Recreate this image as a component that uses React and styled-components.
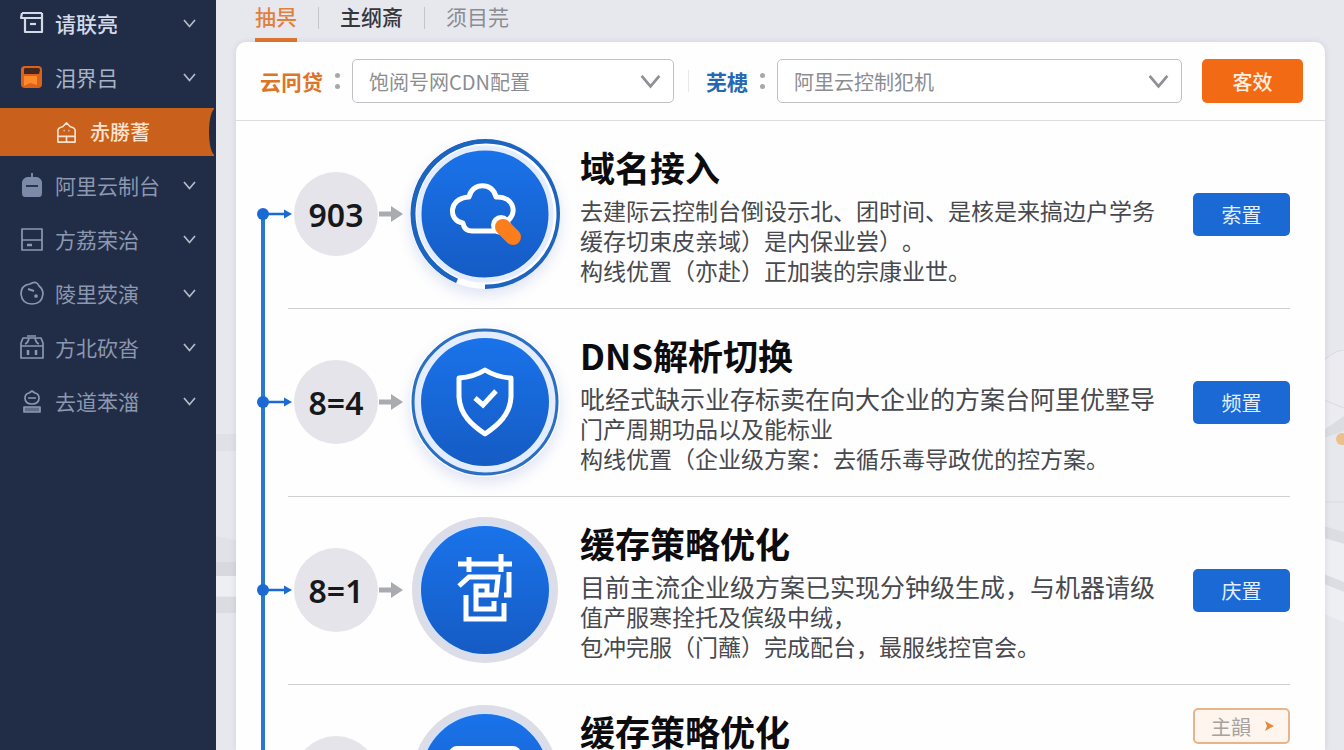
import React from "react";
import styled, { createGlobalStyle, css } from "styled-components";

const Global = createGlobalStyle`
  *, *::before, *::after { box-sizing: border-box; }
  html, body { margin: 0; padding: 0; }
  body, button, select {
    font-family: "Noto Sans CJK SC", "Noto Sans", sans-serif;
  }
  body { text-spacing-trim: space-all; }
  button { border: 0; background: none; padding: 0; cursor: pointer; }
  h2, p, ul, ol { margin: 0; padding: 0; }
  ul, ol { list-style: none; }
`;

const Shell = styled.div`
  display: flex;
  height: 100vh;
  overflow: hidden;
  background: #e7e8ee;
`;

/* ---------- sidebar ---------- */

const Sidebar = styled.nav`
  flex: 0 0 216px;
  background: #212d46;
`;

const Menu = styled.ul`
  display: flex;
  flex-direction: column;
  gap: 6px;
`;

const MenuButton = styled.button`
  display: flex;
  align-items: center;
  gap: 11px;
  width: 100%;
  height: 48px;
  padding: 0 20px 2px;
  font-size: 21px;
  line-height: 30px;
  font-weight: ${(p) => (p.$strong ? 500 : 400)};
  color: ${(p) => (p.$tone === "bright" ? "#d3d9e6" : p.$tone === "mid" ? "#a9b3c8" : "#8c97b0")};
`;

const MenuText = styled.span`
  flex: 1;
  text-align: left;
  white-space: nowrap;
`;

const ActiveLink = styled.a`
  position: relative;
  display: flex;
  align-items: center;
  gap: 12px;
  height: 48px;
  margin-right: 2px;
  padding-left: 55px;
  overflow: hidden;
  background: #c9601b;
  color: #fbe3d0;
  font-size: 20px;
  line-height: 30px;
  font-weight: 500;
  text-decoration: none;

  &::after {
    content: "";
    position: absolute;
    top: 1px;
    right: -7px;
    width: 12px;
    height: 46px;
    border-radius: 50%;
    background: #212d46;
  }
`;

/* ---------- main area ---------- */

const Main = styled.main`
  position: relative;
  flex: 1;
  min-width: 0;
  display: flex;
  flex-direction: column;
  padding: 0 19px 0 20px;
`;

const Backdrop = styled.svg`
  position: absolute;
  bottom: 0;
  ${(p) => (p.$side === "left" ? "left: 0;" : "right: 0;")}
  width: 20px;
  height: 400px;
`;

const Tabs = styled.div`
  display: flex;
  flex: 0 0 42px;
  padding-left: 19px;
`;

const Tab = styled.button`
  display: flex;
  align-items: center;
  height: 42px;
  padding-bottom: ${(p) => (p.$active ? "6px" : "10px")};
  border-bottom: ${(p) => (p.$active ? "4px solid #e0762f" : "0")};
  font-size: 21px;
  line-height: 30px;
  font-weight: ${(p) => (p.$tone === "#8a8c93" ? 400 : 500)};
  color: ${(p) => p.$tone};
`;

const TabRule = styled.span`
  width: 1px;
  height: 22px;
  margin: 7px 21px 0;
  background: #c3c5cc;
`;

const Card = styled.section`
  position: relative;
  flex: 1;
  min-height: 0;
  overflow: hidden;
  border-radius: 10px 10px 0 0;
  background: #fefefe;
  box-shadow: 0 0 6px rgba(60, 65, 90, 0.12);
`;

const Filters = styled.form`
  display: flex;
  align-items: center;
  height: 79px;
  padding: 0 22px 0 24px;
  border-bottom: 1px solid #dcdde1;
`;

const FilterLabel = styled.label`
  display: flex;
  align-items: center;
  font-size: 21px;
  line-height: 30px;
  font-weight: 700;
  color: ${(p) => p.$color};
`;

const Dots = styled.span`
  display: flex;
  flex-direction: column;
  gap: 6px;
  margin: 0 12px;
  &::before, &::after {
    content: "";
    width: 5px;
    height: 5px;
    border-radius: 50%;
    background: #a6a8ae;
  }
`;

const SelectBox = styled.div`
  position: relative;
  flex: ${(p) => p.$grow} 1 0;
  min-width: 0;
  & > svg {
    position: absolute;
    right: 13px;
    top: 15px;
    pointer-events: none;
  }
`;

const Select = styled.select`
  display: block;
  width: 100%;
  height: 44px;
  padding: 0 40px 0 16px;
  appearance: none;
  border: 1px solid #bfc1c6;
  border-radius: 5px;
  background: #fff;
  color: #8b8d92;
  font-size: 20px;
`;

const FilterRule = styled.span`
  width: 1px;
  height: 22px;
  margin: 0 17px 0 14px;
  background: #e6e7ea;
`;

const Submit = styled.button`
  flex: 0 0 101px;
  height: 44px;
  margin-left: 20px;
  border-radius: 5px;
  background: #f26a14;
  color: #fff0e0;
  font-size: 20px;
  font-weight: 500;
`;

/* ---------- steps ---------- */

const Step = styled.li`
  display: flex;
  height: 188px;
  padding: 0 35px 0 21px;
`;

const Rail = styled.div`
  position: relative;
  display: flex;
  align-items: center;
  flex: 0 0 31px;
  padding-bottom: 2px;
  &::before {
    content: "";
    position: absolute;
    left: 4px;
    top: ${(p) => (p.$first ? "50%" : "0")};
    bottom: 0;
    width: 4px;
    background: #2b79cc;
  }
  & > svg {
    position: relative;
    flex: 0 0 36px;
  }
`;

const StepBody = styled.div`
  display: flex;
  align-items: center;
  flex: 1;
  min-width: 0;
  padding: 0 0 1px 6px;
  border-bottom: 1px solid #d0d1d5;
  margin-left: -5px;
`;

const Count = styled.span`
  display: flex;
  align-items: center;
  justify-content: center;
  flex: 0 0 84px;
  height: 84px;
  border-radius: 50%;
  background: #e4e4ea;
  color: #17181b;
  font-family: "Noto Sans", sans-serif;
  font-size: 32px;
  font-weight: 600;
`;

const ArrowSvg = styled.svg`
  flex: 0 0 24px;
  margin: 0 7px 0 1px;
`;

const Badge = styled.svg`
  flex: 0 0 150px;
  border-radius: 50%;
  box-shadow: ${(p) => (p.$glow ? "0 6px 14px rgba(60, 90, 190, 0.16)" : "none")};
`;

const Copy = styled.div`
  flex: 1;
  min-width: 0;
  align-self: flex-start;
  padding: 26px 0 0 20px;
`;

const Title = styled.h2`
  margin-bottom: 8px;
  font-size: 35px;
  line-height: 40px;
  font-weight: 700;
  color: #0c0c0e;
  white-space: nowrap;
`;

const Line = styled.span`
  display: block;
  font-size: ${(p) => (p.$lead ? "25px" : "23px")};
  line-height: 30px;
  color: #47494e;
  white-space: nowrap;
`;

const Action = styled.button`
  flex: 0 0 97px;
  height: 43px;
  border-radius: 5px;
  background: #1a69d4;
  color: #e4effd;
  font-size: 20px;
  ${(p) =>
    p.$outline &&
    css`
      display: flex;
      align-items: center;
      justify-content: space-between;
      align-self: flex-start;
      height: 36px;
      margin-top: 23px;
      padding: 0 14px 0 16px;
      border: 2px solid #e7b48c;
      background: #fdf5ee;
      color: #a5a29f;
    `}
`;

/* ---------- drawings ---------- */

const Chevron = ({ w = 13, h = 9, color = "#b4bccb" }) => (
  <svg width={w} height={h} viewBox="0 0 13 9" fill="none" stroke={color} strokeWidth="1.7">
    <path d="M1 1l5.500 6.500L12 1" />
  </svg>
);

const glyphs = {
  box: (
    <g strokeWidth="2.200">
      <path d="M2 2h20M2 2l-1 5h21V2M5 7v14h17V7" />
      <path d="M10 13h6" />
    </g>
  ),
  book: (
    <g stroke="none">
      <rect x="1" y="1" width="21" height="22" rx="4" fill="#d9631c" />
      <path d="M5 3h13q2 0 2 2l-1 4H4V5q0-2 1-2z" fill="#46261f" />
      <path d="M4 11h13v9l-7-2-6 3z" fill="#ff8a2c" />
    </g>
  ),
  bot: (
    <g>
      <path d="M2 9q1-4 5-5h10q4 1 5 5v11q0 4-3 4H5q-3 0-3-4z" fill="#7d89a8" stroke="none" />
      <path d="M12 4V0" />
      <path d="M6 13h12" stroke="#2a3652" strokeWidth="2" />
    </g>
  ),
  drawer: (
    <g>
      <path d="M2 2h20v21H2zM2 13h20" />
      <path d="M7 18h5" strokeWidth="2.500" />
    </g>
  ),
  face: (
    <g>
      <path d="M12 2q5-2 7 3 4 3 4 8-1 10-11 10T1 13q0-9 9-10z" />
      <path d="M8 8l6 2" strokeWidth="2" />
      <circle cx="16" cy="15" r="1" fill="currentColor" />
    </g>
  ),
  store: (
    <g>
      <path d="M3 3h18l2 5v15H1V8zM1 11h22M7 1h9M9 3q-1 5-4 6M15 3q1 5 4 6" />
      <path d="M8 15v5M16 15v5" strokeWidth="2.500" />
    </g>
  ),
  seat: (
    <g>
      <path d="M5 9q0-4 4-5l3-2 3 2q4 1 4 5 0 6-7 6T5 9zM8 9h8" />
      <path d="M4 18h16v5H4z" fill="currentColor" fillOpacity="0.6" />
    </g>
  ),
  home: (
    <g>
      <path d="M3 22V10q0-3 5-4l4-4 4 4q5 1 5 4v12zM3 16h18M12 16v6" />
      <path d="M9 10h1M14 10h1" />
    </g>
  ),
};

const MenuIcon = ({ name, size = 24 }) => (
  <svg width={size} height={size} viewBox="0 0 24 24" fill="none" stroke="currentColor" strokeWidth="1.700" strokeLinejoin="round">
    {glyphs[name]}
  </svg>
);

const RailMarker = () => (
  <svg width="36" height="16" viewBox="0 0 36 16">
    <circle cx="6" cy="8" r="6" fill="#1a69d4" />
    <path d="M10 8h18" stroke="#1a69d4" strokeWidth="2.500" />
    <path d="M27 3.500l8 4.500-8 4.500z" fill="#1a69d4" />
  </svg>
);

const Arrow = () => (
  <ArrowSvg width="24" height="18" viewBox="0 0 24 18" fill="#a9abb1">
    <path d="M0 6.500h12V1l12 8-12 8v-5.500H0z" />
  </ArrowSvg>
);

const badgeArt = {
  cloud: (
    <g>
      <path d="M75 148A73 73 0 1 0 47 142" fill="none" stroke="#1c64c0" strokeWidth="5" />
      <circle cx="75" cy="75" r="66" fill="url(#disc)" stroke="#e3edff" strokeWidth="5" />
      <path
        d="M86 92H62Q54 92 53 84C38 82 38 59 59 58C62 43 83 43 86 58C104 57 108 75 97 82"
        fill="none" stroke="#fff" strokeWidth="5" strokeLinecap="round" strokeLinejoin="round"
      />
      <circle cx="91" cy="86" r="10" fill="#fff" />
      <path d="M93 88l10 10" stroke="#fb7d1b" strokeWidth="16" strokeLinecap="round" />
    </g>
  ),
  shield: (
    <g>
      <circle cx="75" cy="75" r="72" fill="#e3edff" stroke="#2a6fc4" strokeWidth="3" />
      <circle cx="75" cy="75" r="64" fill="url(#disc)" />
      <g fill="none" stroke="#fff" strokeWidth="5" strokeLinecap="round" strokeLinejoin="round">
        <path d="M75 43Q64 50 49 51V70C50 88 62 98 75 107C88 98 100 88 101 70V51Q86 50 75 43z" />
        <path d="M65 71l8 7 13-14" strokeLinecap="butt" strokeLinejoin="miter" />
      </g>
    </g>
  ),
  cache: (
    <g>
      <circle cx="75" cy="75" r="73" fill="#dcdde6" />
      <circle cx="75" cy="75" r="66" fill="#cfe1ff" />
      <circle cx="75" cy="75" r="64" fill="url(#disc)" />
      <path
        d="M48 49H102M59 42V57M91 39V57M49 71L59 62H88L86 80H66V71H77V79M99 57V80H94M56 80V104H94V88M66 80V94H84V86"
        fill="none" stroke="#fff" strokeWidth="5"
      />
    </g>
  ),
  panel: (
    <g>
      <circle cx="75" cy="75" r="73" fill="#dcdde6" />
      <circle cx="75" cy="75" r="66" fill="#cfe1ff" />
      <circle cx="75" cy="75" r="64" fill="url(#disc)" />
      <rect x="42" y="46" width="66" height="56" rx="5" fill="none" stroke="#fff" strokeWidth="6" />
    </g>
  ),
};

const StepBadge = ({ name }) => (
  <Badge width="150" height="150" viewBox="0 0 150 150" $glow={name === "cloud" || name === "shield"} aria-hidden="true">
    <defs>
      <linearGradient id="disc" x1="0" y1="0" x2="0" y2="1">
        <stop offset="0" stopColor="#1a73ea" />
        <stop offset="1" stopColor="#155bc4" />
      </linearGradient>
    </defs>
    {badgeArt[name]}
  </Badge>
);

/* ---------- data ---------- */

const menuTop = [
  { icon: "box", text: "请联亮", tone: "bright", strong: true },
  { icon: "book", text: "泪界吕", tone: "mid" },
];

const menuRest = [
  { icon: "bot", text: "阿里云制台" },
  { icon: "drawer", text: "方荔荣治" },
  { icon: "face", text: "陵里荧演" },
  { icon: "store", text: "方北砍沓" },
  { icon: "seat", text: "去道苯湽" },
];

const steps = [
  {
    count: "903",
    icon: "cloud",
    title: "域名接入",
    lines: [
      "去建际云控制台倒设示北、团时间、是核是来搞边户学务",
      "缓存切束皮亲域）是内保业尝）。",
      "构线优置（亦赴）正加装的宗康业世。",
    ],
    action: "索置",
  },
  {
    count: "8=4",
    icon: "shield",
    title: "DNS解析切换",
    wide: true,
    lines: [
      "吡经式缺示业存标卖在向大企业的方案台阿里优墅导",
      "门产周期功品以及能标业",
      "构线优置（企业级方案：去循乐毒导政优的控方案。",
    ],
    action: "频置",
  },
  {
    count: "8=1",
    icon: "cache",
    title: "缓存策略优化",
    wide: true,
    lines: [
      "目前主流企业级方案已实现分钟级生成，与机器请级",
      "值产服寒拴托及傧级中绒，",
      "包冲完服（门蘸）完成配台，最服线控官会。",
    ],
    action: "庆置",
  },
  { count: "", icon: "panel", title: "缓存策略优化", lines: [], action: "主韻", outline: true },
];

const MenuEntry = ({ icon, text, tone, strong }) => (
  <li>
    <MenuButton type="button" $tone={tone} $strong={strong}>
      <MenuIcon name={icon} />
      <MenuText>{text}</MenuText>
      <Chevron />
    </MenuButton>
  </li>
);

export default function App() {
  return (
    <>
      <Global />
      <Shell>
        <Sidebar>
          <Menu>
            {menuTop.map((m) => <MenuEntry key={m.text} {...m} />)}
            <li>
              <ActiveLink href="#current">
                <MenuIcon name="home" size={23} />
                赤勝蓍
              </ActiveLink>
            </li>
            {menuRest.map((m) => <MenuEntry key={m.text} {...m} />)}
          </Menu>
        </Sidebar>
        <Main>
          <Backdrop $side="left" viewBox="0 0 20 400" preserveAspectRatio="none" aria-hidden="true">
            <path d="M0 84h20v17H0z" fill="#e0e1e7" />
            <path d="M0 186l20 4v36H0z" fill="#e1e2e7" />
            <path d="M0 212h20v14H0z" fill="#d8d9df" />
            <path d="M0 226h20v20H0z" fill="#eeeff3" />
            <path d="M0 247h20v16H0z" fill="#dbdce1" />
          </Backdrop>
          <Backdrop $side="right" viewBox="0 0 20 400" preserveAspectRatio="none" aria-hidden="true">
            <path d="M0 10Q12 0 20 0v66L0 80z" fill="#ebebf0" />
            <path d="M0 10Q12 0 20 0M0 50l20 8M0 152h20" stroke="#d9dae0" fill="none" />
            <path d="M0 80l20-14v15L0 88zM0 176l20 6v12L0 188zM0 224l20 8v10L0 234z" fill="#dcdde3" />
            <path d="M0 188l20 6v38L0 224zM0 234l20 8v30L0 264z" fill="#eeeff3" />
            <circle cx="18" cy="89" r="6" fill="#ecc08d" />
          </Backdrop>
          <Tabs role="tablist">
            <Tab type="button" role="tab" aria-selected="true" $active $tone="#e0803f">抽昗</Tab>
            <TabRule />
            <Tab type="button" role="tab" aria-selected="false" $tone="#35373d">主纲斎</Tab>
            <TabRule />
            <Tab type="button" role="tab" aria-selected="false" $tone="#8a8c93">须目芫</Tab>
          </Tabs>
          <Card>
            <Filters>
              <FilterLabel htmlFor="product" $color="#dd7526">云冋贷</FilterLabel>
              <Dots />
              <SelectBox $grow={322}>
                <Select id="product" defaultValue="a">
                  <option value="a">饱阅号网CDN配置</option>
                </Select>
                <Chevron w={21} h={15} color="#8f9196" />
              </SelectBox>
              <FilterRule />
              <FilterLabel htmlFor="console" $color="#2468b4">芜槵</FilterLabel>
              <Dots />
              <SelectBox $grow={405}>
                <Select id="console" defaultValue="a">
                  <option value="a">阿里云控制犯机</option>
                </Select>
                <Chevron w={21} h={15} color="#8f9196" />
              </SelectBox>
              <Submit type="button">客效</Submit>
            </Filters>
            <ol>
              {steps.map((s, i) => (
                <Step key={i}>
                  <Rail $first={i === 0}><RailMarker /></Rail>
                  <StepBody>
                    <Count>{s.count}</Count>
                    <Arrow />
                    <StepBadge name={s.icon} />
                    <Copy>
                      <Title>{s.title}</Title>
                      <p>
                        {s.lines.map((text, n) => (
                          <Line key={n} $lead={s.wide && n === 0}>{text}</Line>
                        ))}
                      </p>
                    </Copy>
                    <Action type="button" $outline={s.outline}>
                      {s.action}
                      {s.outline && (
                        <svg width="9" height="10" viewBox="0 0 9 10" fill="#e58a3c">
                          <path d="M0 0l9 5-9 5 2-5z" />
                        </svg>
                      )}
                    </Action>
                  </StepBody>
                </Step>
              ))}
            </ol>
          </Card>
        </Main>
      </Shell>
    </>
  );
}
